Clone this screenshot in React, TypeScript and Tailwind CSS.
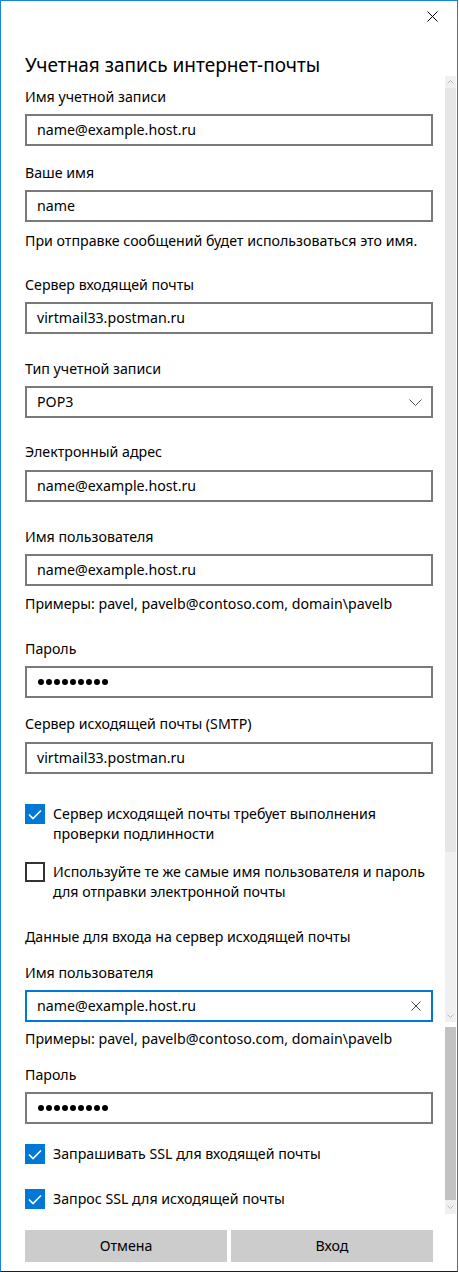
import { useState } from 'react';

const font = { fontFamily: '"Noto Sans", "Open Sans", sans-serif' };

function Label({ text, className = '' }: { text: string; className?: string }) {
  return <div className={`h-[20px] text-[14.2px] leading-[20px] text-black ${className}`}>{text}</div>;
}

function TextBox({ value, className = '' }: { value: string; className?: string }) {
  return (
    <div
      className={`flex h-[32px] w-[408px] items-center border-2 border-[#7a7a7a] bg-white pl-[10px] text-[14.2px] text-black ${className}`}
    >
      {value}
    </div>
  );
}

function PasswordBox({ className = '' }: { className?: string }) {
  return (
    <div className={`flex h-[32px] w-[408px] items-center gap-[2px] border-2 border-[#7a7a7a] bg-white pl-[11px] ${className}`}>
      {Array.from({ length: 9 }).map((_, i) => (
        <span key={i} className="h-[6px] w-[6px] rounded-full bg-black" />
      ))}
    </div>
  );
}

function CheckBox({ checked, lines, className = '' }: { checked: boolean; lines: string[]; className?: string }) {
  return (
    <div className={`flex items-start gap-[8px] ${className}`}>
      {checked ? (
        <div className="flex h-[20px] w-[20px] shrink-0 items-center justify-center bg-[#0078d7]">
          <svg width="14" height="11" viewBox="0 0 14 11" fill="none">
            <path d="M1 5.5 L5 9.5 L13 1.5" stroke="white" strokeWidth="1.6" />
          </svg>
        </div>
      ) : (
        <div className="h-[20px] w-[20px] shrink-0 border-2 border-[#333333] bg-white" />
      )}
      <div className="text-[14.2px] leading-[20px] text-black">
        {lines.map((l) => (
          <div key={l}>{l}</div>
        ))}
      </div>
    </div>
  );
}

function Chevron({ up }: { up?: boolean }) {
  return (
    <svg width="7" height="4" viewBox="0 0 7 4" fill="none">
      <path d={up ? 'M0.5 3.5 L3.5 0.5 L6.5 3.5' : 'M0.5 0.5 L3.5 3.5 L6.5 0.5'} stroke="#b8b8b8" strokeWidth="1" />
    </svg>
  );
}

export default function App() {
  const [agree] = useState(true);
  return (
    <div className="h-[1272px] w-[459px] bg-white" style={font}>
      <div className="relative h-full w-[458px] border border-b-[#1f1f1f] border-l-[#1883d7] border-r-[#1883d7] border-t-[#1883d7]">
        {/* close button */}
        <div className="flex h-[31px] items-center justify-end pr-[19px]">
          <svg width="11" height="11" viewBox="0 0 11 11">
            <path d="M0.5 0.5 L10.5 10.5 M10.5 0.5 L0.5 10.5" stroke="#000" strokeWidth="1" />
          </svg>
        </div>

        <div className="flex flex-col pl-[24px]">
          <div className="mt-[19px] h-[28px] text-[19px] leading-[28px] text-black">Учетная запись интернет-почты</div>

          <Label text="Имя учетной записи" className="mt-[8px]" />
          <TextBox value="name@example.host.ru" className="mt-[7px]" />

          <Label text="Ваше имя" className="mt-[17px]" />
          <TextBox value="name" className="mt-[7px]" />
          <Label text="При отправке сообщений будет использоваться это имя." className="mt-[9px]" />

          <Label text="Сервер входящей почты" className="mt-[24px]" />
          <TextBox value="virtmail33.postman.ru" className="mt-[7px]" />

          <Label text="Тип учетной записи" className="mt-[25px]" />
          <div className="mt-[7px] flex h-[32px] w-[408px] items-center justify-between border-2 border-[#7a7a7a] bg-white pl-[10px] pr-[9px] text-[14.2px] text-black">
            <span>POP3</span>
            <svg width="13" height="7" viewBox="0 0 13 7" fill="none">
              <path d="M0.5 0.5 L6.5 6.5 L12.5 0.5" stroke="#555" strokeWidth="1" />
            </svg>
          </div>

          <Label text="Электронный адрес" className="mt-[24px]" />
          <TextBox value="name@example.host.ru" className="mt-[8px]" />

          <Label text="Имя пользователя" className="mt-[25px]" />
          <TextBox value="name@example.host.ru" className="mt-[7px]" />
          <Label text="Примеры: pavel, pavelb@contoso.com, domain\pavelb" className="mt-[8px]" />

          <Label text="Пароль" className="mt-[25px]" />
          <PasswordBox className="mt-[7px]" />

          <Label text="Сервер исходящей почты (SMTP)" className="mt-[16px]" />
          <TextBox value="virtmail33.postman.ru" className="mt-[8px]" />

          <CheckBox
            checked={agree}
            lines={['Сервер исходящей почты требует выполнения', 'проверки подлинности']}
            className="mt-[30px]"
          />
          <CheckBox
            checked={false}
            lines={['Используйте те же самые имя пользователя и пароль', 'для отправки электронной почты']}
            className="mt-[18px]"
          />

          <Label text="Данные для входа на сервер исходящей почты" className="mt-[25px]" />
          <Label text="Имя пользователя" className="mt-[16px]" />
          <div className="mt-[7px] flex h-[32px] w-[408px] items-center justify-between border-2 border-[#0078d7] bg-white pl-[10px] pr-[10px] text-[14.2px] text-black">
            <span>name@example.host.ru</span>
            <svg width="10" height="10" viewBox="0 0 10 10">
              <path d="M0.5 0.5 L9.5 9.5 M9.5 0.5 L0.5 9.5" stroke="#444" strokeWidth="1" />
            </svg>
          </div>
          <Label text="Примеры: pavel, pavelb@contoso.com, domain\pavelb" className="mt-[7px]" />

          <Label text="Пароль" className="mt-[16px]" />
          <PasswordBox className="mt-[7px]" />

          <CheckBox checked lines={['Запрашивать SSL для входящей почты']} className="mt-[20px]" />
          <CheckBox checked lines={['Запрос SSL для исходящей почты']} className="mt-[25px]" />

          <div className="mt-[21px] flex w-[408px] gap-[4px]">
            <button className="h-[32px] flex-1 bg-[#cccccc] text-[14.2px] text-black">Отмена</button>
            <button className="h-[32px] flex-1 bg-[#cccccc] text-[14.2px] text-black">Вход</button>
          </div>
        </div>

        {/* scrollbar overlay */}
        <div className="absolute right-[1px] top-[75px] flex w-[11px] flex-col">
          <div className="flex h-[12px] items-center justify-center bg-[#f0f0f0]">
            <Chevron up />
          </div>
          <div className="h-[764px] bg-[#e6e6e6]" />
          <div className="h-[158px] bg-[#f0f0f0]" />
          <div className="flex h-[12px] items-center justify-center bg-[#f0f0f0]">
            <Chevron />
          </div>
          <div className="h-[5px] bg-white" />
          <div className="h-[173px] bg-[#c2c2c2]" />
          <div className="flex h-[14px] items-center justify-center bg-[#f0f0f0]">
            <Chevron />
          </div>
        </div>
      </div>
    </div>
  );
}
